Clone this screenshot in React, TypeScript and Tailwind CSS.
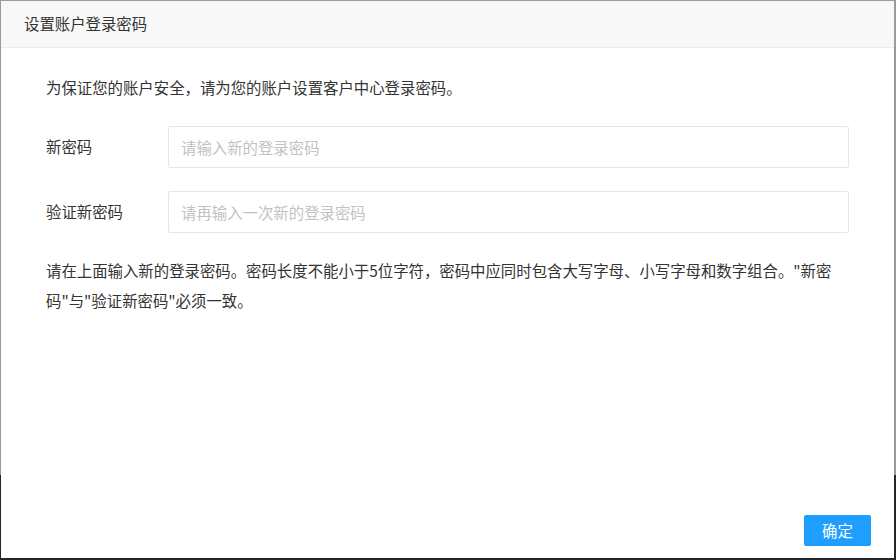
import React from "react";

const font = {
  fontFamily: '"Noto Sans CJK SC", "Noto Sans", "Liberation Sans", sans-serif',
};

const Field: React.FC<{ label: string; placeholder: string }> = ({ label, placeholder }) => (
  <div className="flex items-center">
    <label className="w-[122px] shrink-0 text-[15.4px] text-[#333]">{label}</label>
    <input
      type="password"
      placeholder={placeholder}
      className="h-[42px] w-[681px] rounded-[2px] border border-[#e6e6e6] bg-white px-[12px] text-[15.4px] text-[#333] outline-none placeholder:text-[#c2c2c2]"
      style={font}
    />
  </div>
);

export default function App() {
  return (
    <div className="relative h-[560px] w-[896px] overflow-hidden bg-[#23262b]" style={font}>
      {/* page behind the dialog */}
      <div className="flex h-full flex-col">
        <div className="h-[475px] bg-[#9b9b9b]" />
        <div className="flex-1 bg-[#23262b]" />
      </div>

      {/* dialog */}
      <div className="absolute left-[1px] top-[1px] flex h-[557px] w-[893px] flex-col bg-white">
        <div className="flex h-[47px] shrink-0 items-center border-b border-[#ececec] bg-[#f8f8f8] pl-[23px] text-[15.4px] text-[#333]">
          设置账户登录密码
        </div>

        <div className="flex-1 pl-[45px] pr-[45px] pt-[24px]">
          <p className="text-[15.4px] leading-[30px] text-[#333]">
            为保证您的账户安全，请为您的账户设置客户中心登录密码。
          </p>
          <div className="mt-[24px] flex flex-col gap-[23px]">
            <Field label="新密码" placeholder="请输入新的登录密码" />
            <Field label="验证新密码" placeholder="请再输入一次新的登录密码" />
          </div>
          <p className="mt-[22px] w-[803px] text-[15.4px] leading-[30px] text-[#333]">
            请在上面输入新的登录密码。密码长度不能小于5位字符，密码中应同时包含大写字母、小写字母和数字组合。"新密码"与"验证新密码"必须一致。
          </p>
        </div>

        <div className="flex shrink-0 justify-end pb-[12px] pr-[23px]">
          <button className="h-[31px] w-[67px] rounded-[2px] bg-[#1e9fff] text-[15.4px] text-white">
            确定
          </button>
        </div>
      </div>
    </div>
  );
}
